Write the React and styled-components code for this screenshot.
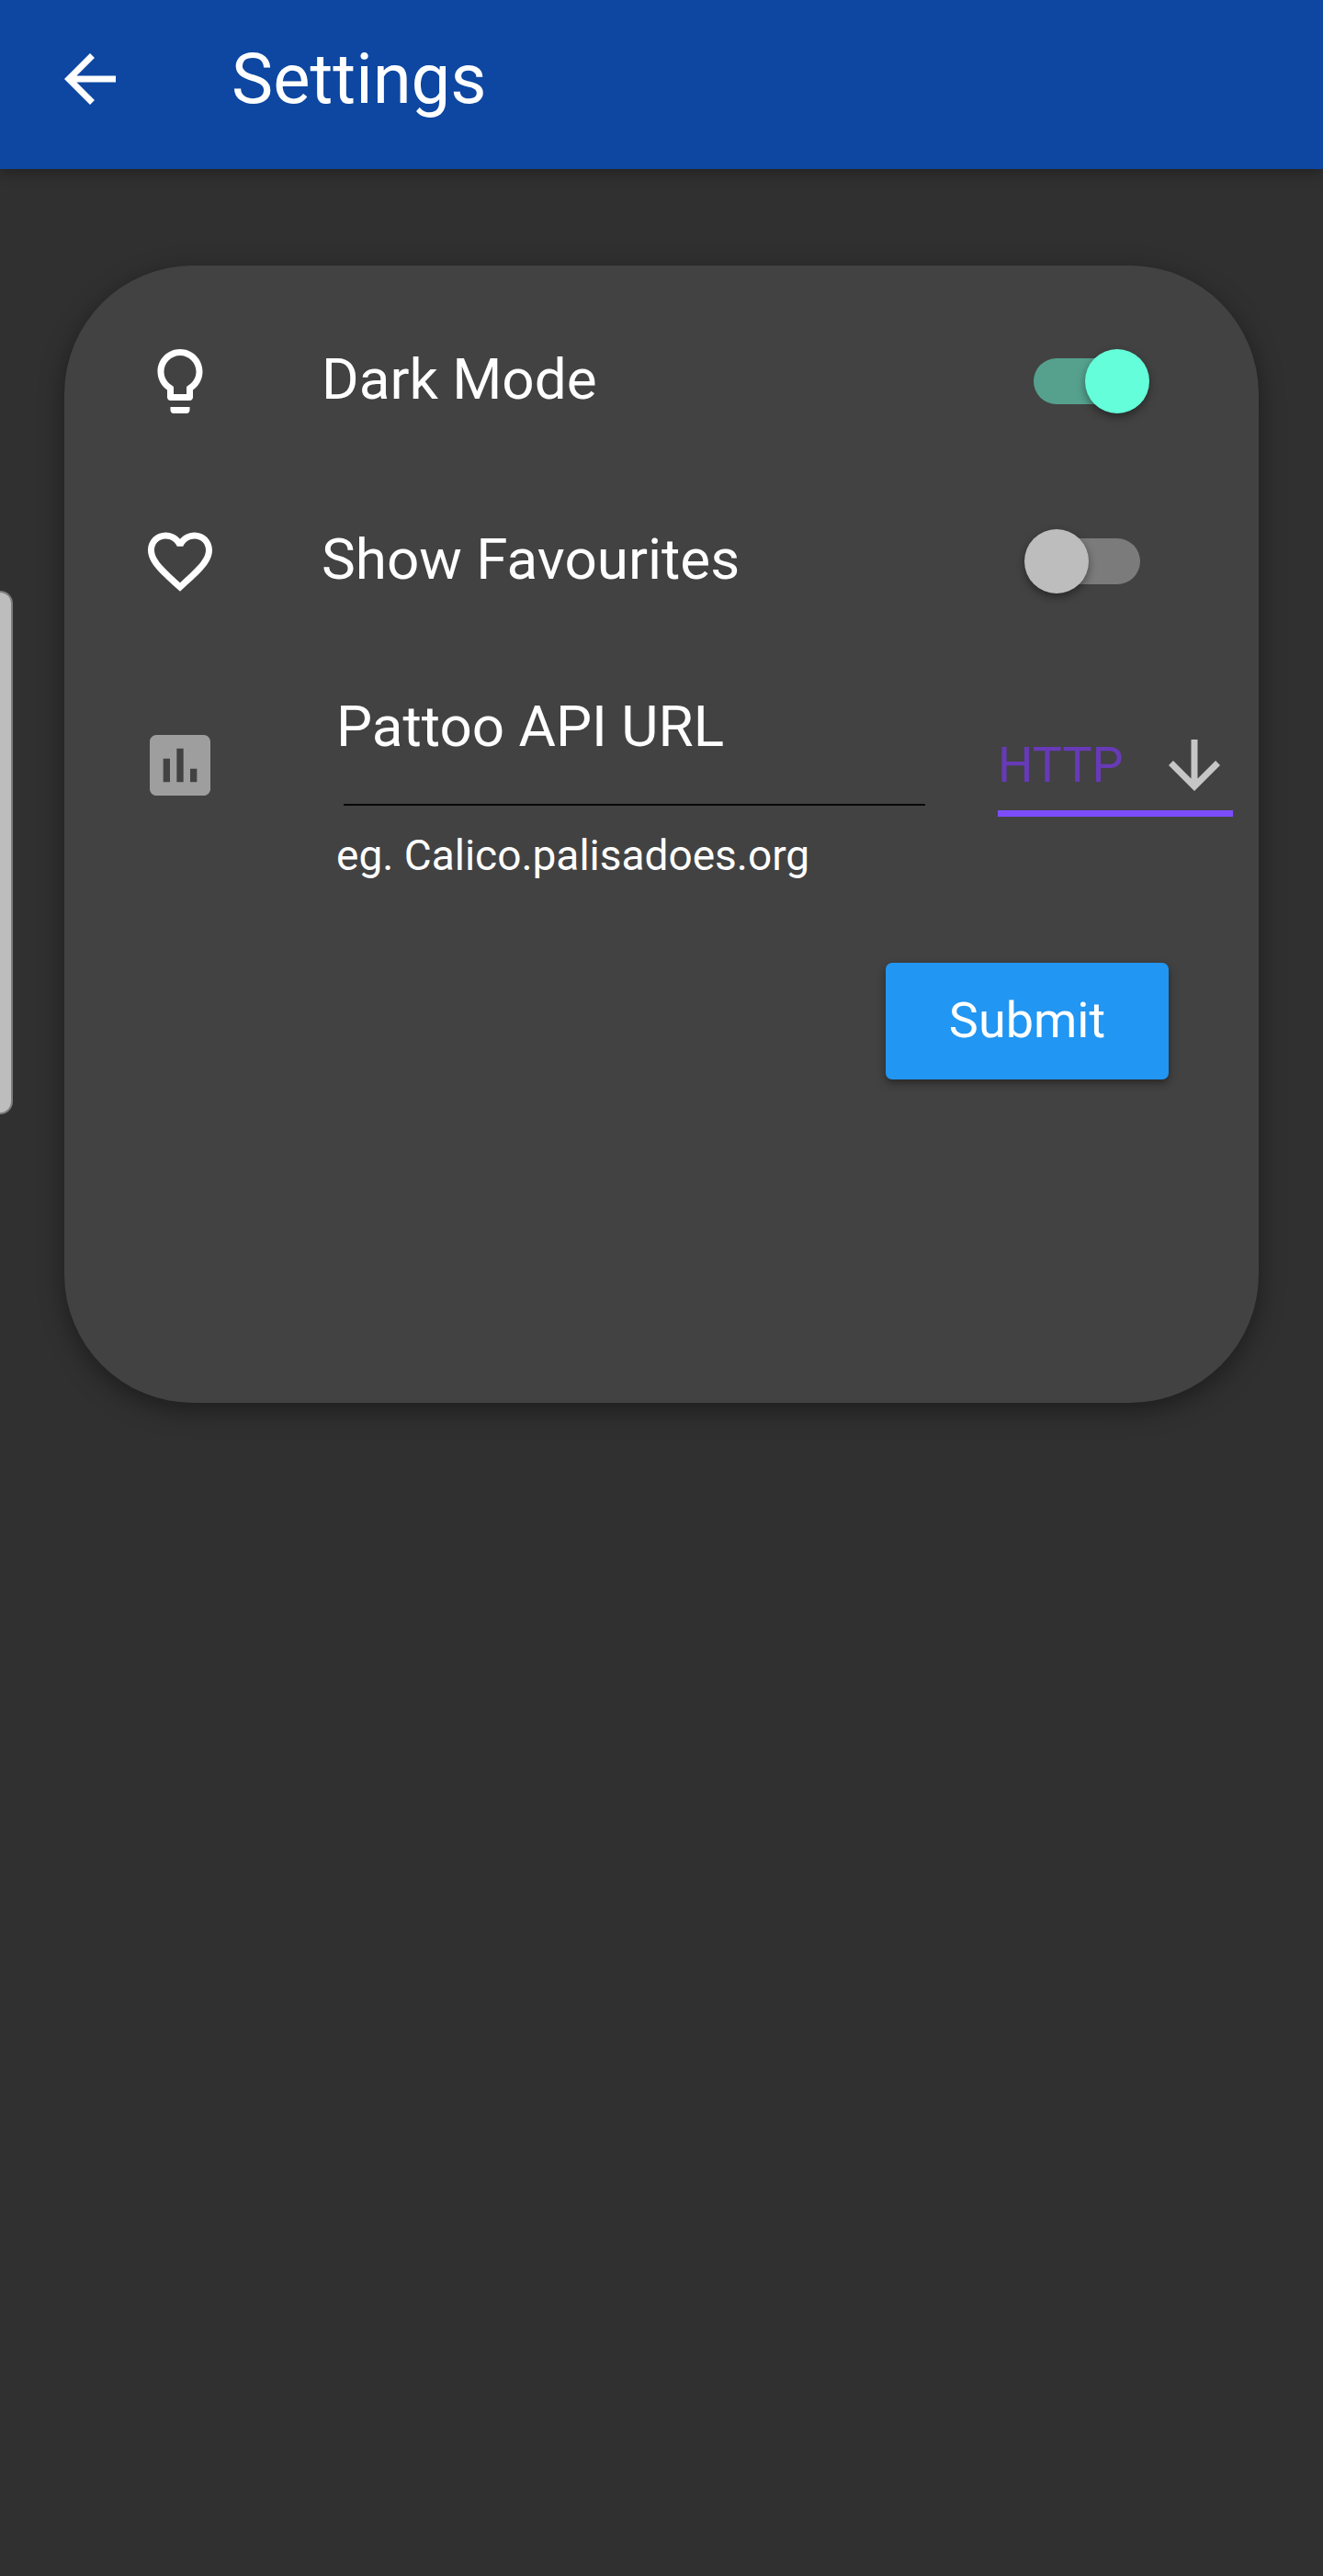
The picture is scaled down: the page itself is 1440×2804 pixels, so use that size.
import React, { useState } from "react";
import styled, { createGlobalStyle } from "styled-components";

const GlobalStyle = createGlobalStyle`
  *, *::before, *::after { box-sizing: border-box; }
  html { background: #303030; }
  body {
    margin: 0;
    background: #303030;
    color: #fff;
    font-family: Roboto, "Liberation Sans", sans-serif;
  }
`;

const Page = styled.div`
  position: relative;
  min-height: 100vh;
`;

const AppBar = styled.header`
  display: flex;
  align-items: center;
  gap: 112px;
  height: 184px;
  padding: 0 56px 12px;
  background: #0d47a1;
  box-shadow: 0 4px 14px rgba(0, 0, 0, 0.3);
`;

const BackButton = styled.button`
  display: flex;
  padding: 0;
  border: 0;
  background: none;
  color: #fff;
  cursor: pointer;
`;

const Title = styled.h1`
  margin: 0;
  font-size: 76px;
  line-height: 90px;
  font-weight: 400;
`;

const Icon = styled.svg`
  display: block;
  flex: none;
  width: ${(p) => p.$size || 84}px;
  height: ${(p) => p.$size || 84}px;
  fill: ${(p) => p.$color || "#fff"};
`;

const EdgeHandle = styled.div`
  position: absolute;
  top: 643px;
  left: 0;
  width: 14px;
  height: 570px;
  border: 2px solid #7c7c7c;
  border-left: 0;
  border-radius: 0 14px 14px 0;
  background: #bdbdbd;
`;

const Card = styled.form`
  display: flex;
  flex-direction: column;
  margin: 105px 70px;
  padding: 28px 0 352px;
  border-radius: 140px;
  background: #424242;
  box-shadow: 0 8px 28px rgba(0, 0, 0, 0.4);
`;

const Row = styled.div`
  display: flex;
  align-items: center;
  min-height: 196px;
  padding-left: 84px;
  padding-right: ${(p) => p.$end}px;
`;

const IconSlot = styled.div`
  display: flex;
  flex: none;
  justify-content: center;
  width: 84px;
  margin-right: 112px;
`;

const RowLabel = styled.label`
  flex: 1;
  padding-bottom: 4px;
  font-size: 62px;
  line-height: 74px;
`;

const Switch = styled.input`
  appearance: none;
  display: grid;
  align-items: center;
  flex: none;
  width: 136px;
  height: 70px;
  margin: 0;
  cursor: pointer;

  &::before,
  &::after {
    content: "";
    grid-area: 1 / 1;
  }
  &::before {
    justify-self: center;
    width: 116px;
    height: 50px;
    border-radius: 25px;
    background: #7b7b7b;
  }
  &::after {
    justify-self: start;
    width: 70px;
    height: 70px;
    border-radius: 50%;
    background: #bdbdbd;
    box-shadow: 0 4px 10px rgba(0, 0, 0, 0.4);
  }
  &:checked::before { background: #55a18e; }
  &:checked::after { justify-self: end; background: #64ffda; }
`;

const Field = styled.div`
  display: flex;
  flex: 1;
  flex-direction: column;
  min-width: 0;
  padding: 45px 0 0 16px;
`;

const FieldLabel = styled.label`
  font-size: 62px;
  line-height: 74px;
`;

const TextInput = styled.input`
  height: 49px;
  margin: 0 0 28px 8px;
  padding: 0;
  border: 0;
  border-bottom: 2px solid #080808;
  outline: 0;
  background: none;
  color: #fff;
  font: 400 40px/47px Roboto, "Liberation Sans", sans-serif;
`;

const Hint = styled.p`
  margin: 0;
  font-size: 46px;
  line-height: 52px;
`;

const SelectBox = styled.div`
  display: grid;
  flex: none;
  align-items: center;
  width: 256px;
  margin-left: 79px;

  > * { grid-area: 1 / 1; }
  > svg { justify-self: end; pointer-events: none; }
`;

const Select = styled.select`
  appearance: none;
  width: 100%;
  height: 112px;
  padding: 7px 84px 0 0;
  border: 0;
  border-bottom: 7px solid #7c4dff;
  border-radius: 0;
  outline: 0;
  background: none;
  color: #673ab7;
  font: 400 54px/64px Roboto, "Liberation Sans", sans-serif;
`;

const SubmitButton = styled.button`
  align-self: flex-end;
  width: 308px;
  height: 127px;
  margin: 91px 98px 0 0;
  padding: 0 0 2px;
  border: 0;
  border-radius: 7px;
  background: #2196f3;
  box-shadow: 0 4px 10px rgba(0, 0, 0, 0.4);
  color: #fff;
  font: 400 54px/64px Roboto, "Liberation Sans", sans-serif;
  cursor: pointer;
`;

const paths = {
  back: "M20 11H7.83l5.59-5.59L12 4l-8 8 8 8 1.41-1.41L7.83 13H20v-2z",
  bulb: "M9 21c0 .55.45 1 1 1h4c.55 0 1-.45 1-1v-1H9v1zm3-19C8.14 2 5 5.14 5 9c0 2.38 1.19 4.47 3 5.74V17c0 .55.45 1 1 1h6c.55 0 1-.45 1-1v-2.26c1.81-1.27 3-3.36 3-5.74 0-3.86-3.14-7-7-7zm2.85 11.1l-.85.6V16h-4v-2.3l-.85-.6C7.8 12.16 7 10.63 7 9c0-2.76 2.24-5 5-5s5 2.24 5 5c0 1.63-.8 3.16-2.15 4.1z",
  heart: "M16.5 3c-1.74 0-3.41.81-4.5 2.09C10.91 3.81 9.24 3 7.5 3 4.42 3 2 5.42 2 8.5c0 3.78 3.4 6.86 8.55 11.54L12 21.35l1.45-1.32C18.6 15.36 22 12.28 22 8.5 22 5.42 19.58 3 16.5 3zm-4.4 15.55l-.1.1-.1-.1C7.14 14.24 4 11.39 4 8.5 4 6.5 5.5 5 7.5 5c1.54 0 3.04.99 3.57 2.36h1.87C13.46 5.99 14.96 5 16.5 5c2 0 3.5 1.5 3.5 3.5 0 2.89-3.14 5.74-7.9 10.05z",
  chart: "M19 3H5c-1.1 0-2 .9-2 2v14c0 1.1.9 2 2 2h14c1.1 0 2-.9 2-2V5c0-1.1-.9-2-2-2zM9 17H7v-7h2v7zm4 0h-2V7h2v10zm4 0h-2v-4h2v4z",
  down: "M20 12l-1.41-1.41L13 16.17V4h-2v12.17l-5.58-5.59L4 12l8 8 8-8z",
};

function Glyph({ name, size, color }) {
  return (
    <Icon viewBox="0 0 24 24" aria-hidden="true" $size={size} $color={color}>
      <path d={paths[name]} />
    </Icon>
  );
}

function SwitchRow({ id, icon, label, initial }) {
  const [on, setOn] = useState(initial);
  return (
    <Row $end={119}>
      <IconSlot>
        <Glyph name={icon} />
      </IconSlot>
      <RowLabel htmlFor={id}>{label}</RowLabel>
      <Switch id={id} type="checkbox" checked={on} onChange={(e) => setOn(e.target.checked)} />
    </Row>
  );
}

export default function App() {
  return (
    <Page>
      <GlobalStyle />
      <AppBar>
        <BackButton type="button" aria-label="Back">
          <Glyph name="back" />
        </BackButton>
        <Title>Settings</Title>
      </AppBar>
      <main>
        <Card onSubmit={(e) => e.preventDefault()}>
          <SwitchRow id="dark-mode" icon="bulb" label="Dark Mode" initial={true} />
          <SwitchRow id="favourites" icon="heart" label="Show Favourites" initial={false} />
          <Row $end={28}>
            <IconSlot>
              <Glyph name="chart" size={88} color="#9e9e9e" />
            </IconSlot>
            <Field>
              <FieldLabel htmlFor="api-url">Pattoo API URL</FieldLabel>
              <TextInput id="api-url" type="text" aria-describedby="api-hint" />
              <Hint id="api-hint">eg. Calico.palisadoes.org</Hint>
            </Field>
            <SelectBox>
              <Select aria-label="Protocol" defaultValue="HTTP">
                <option>HTTP</option>
                <option>HTTPS</option>
              </Select>
              <Glyph name="down" color="#c6c6c6" />
            </SelectBox>
          </Row>
          <SubmitButton type="submit">Submit</SubmitButton>
        </Card>
      </main>
      <EdgeHandle />
    </Page>
  );
}
